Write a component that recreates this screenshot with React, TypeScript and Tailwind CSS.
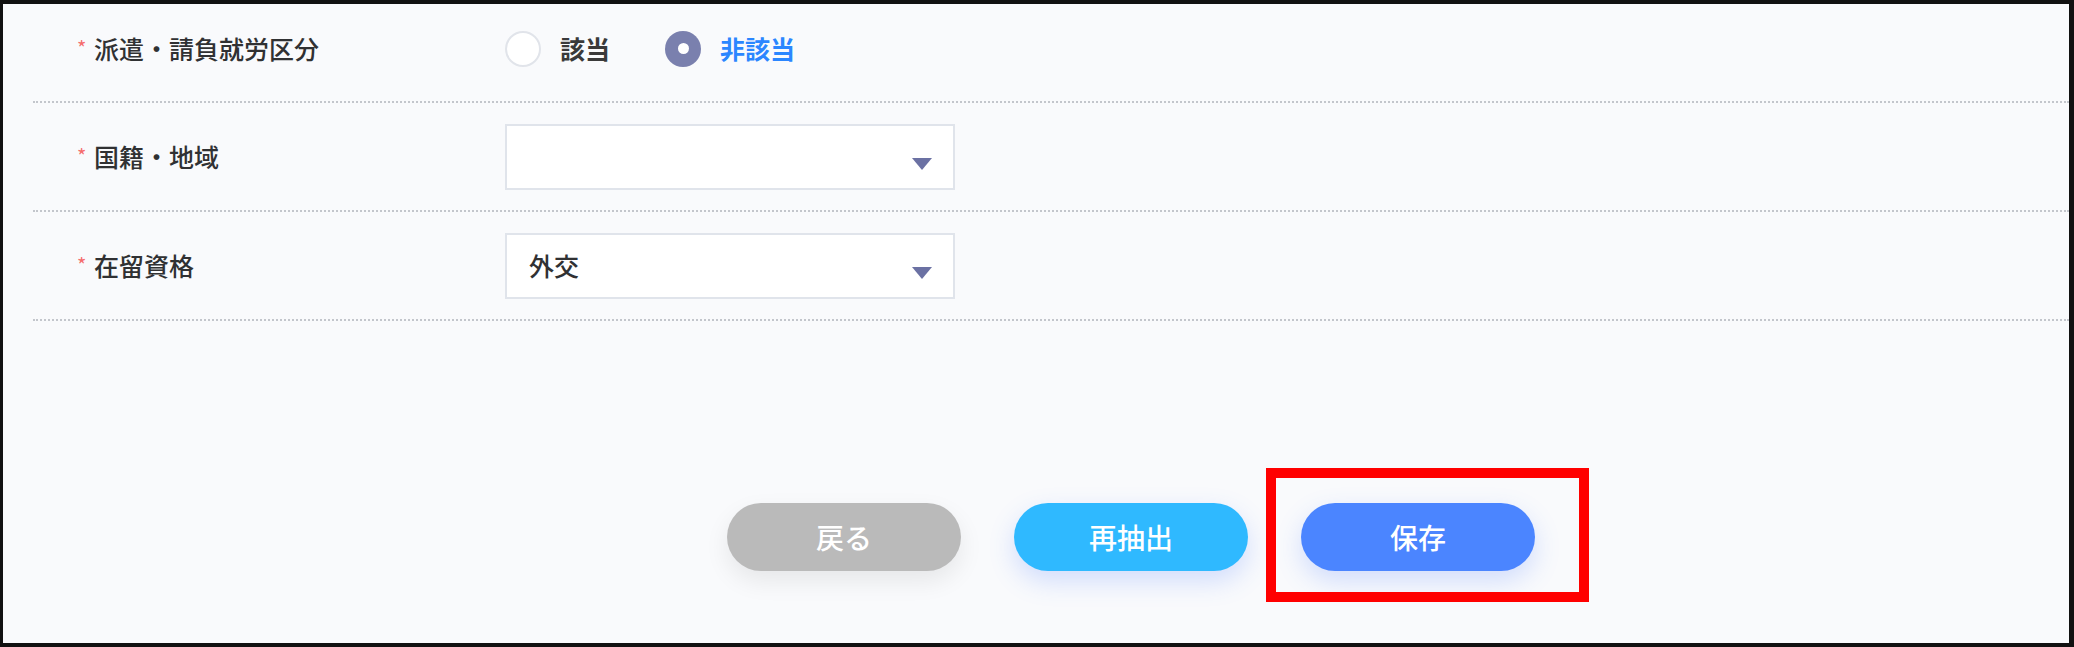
import React from "react";

const rows = [
  { label: "国籍・地域", value: "" },
  { label: "在留資格", value: "外交" },
];

function Label({ text }: { text: string }) {
  return (
    <div className="flex w-[428px] items-center">
      <span className="w-[17px] text-[20px] leading-none text-[#f56c6c] -translate-y-[1px]">*</span>
      <span className="text-[25px] font-medium leading-none text-[#303133]">{text}</span>
    </div>
  );
}

function Radio({ checked, label }: { checked?: boolean; label: string }) {
  return (
    <label className="flex items-center gap-[19px]">
      {checked ? (
        <span className="flex h-[36px] w-[36px] items-center justify-center rounded-full bg-[#7a80ae]">
          <span className="h-[11px] w-[11px] rounded-full bg-white" />
        </span>
      ) : (
        <span className="h-[36px] w-[36px] rounded-full border-2 border-[#e1e4ea] bg-white" />
      )}
      <span
        className={
          checked
            ? "text-[25px] font-bold leading-none text-[#2b86ff]"
            : "text-[25px] font-bold leading-none text-[#3a3a3a]"
        }
      >
        {label}
      </span>
    </label>
  );
}

function Select({ value }: { value: string }) {
  return (
    <div className="flex h-[66px] w-[450px] items-center justify-between border-2 border-[#e0e4eb] bg-white pl-[22px] pr-[21px]">
      <span className="text-[25px] font-medium leading-none text-[#303133]">{value}</span>
      <svg width="20" height="12" viewBox="0 0 20 12" className="mt-[15px]">
        <path d="M0 0h20L10 12z" fill="#6b71a3" />
      </svg>
    </div>
  );
}

export default function App() {
  return (
    <div className="relative h-[647px] w-[2074px] overflow-hidden border-t-4 border-r-[5px] border-b-4 border-l-[3px] border-[#111] bg-[#f9fafc] font-['Noto_Sans_CJK_JP','Noto_Sans',sans-serif]">
      <div className="ml-[30px]">
        <div className="flex h-[99px] items-center border-b-2 border-dotted border-[#c3c6cc] pb-[8px] pl-[44px]">
          <Label text="派遣・請負就労区分" />
          <div className="flex items-center gap-[55px]">
            <Radio label="該当" />
            <Radio checked label="非該当" />
          </div>
        </div>
        {rows.map((r) => (
          <div
            key={r.label}
            className="flex h-[109px] items-center border-b-2 border-dotted border-[#c3c6cc] pl-[44px]"
          >
            <Label text={r.label} />
            <Select value={r.value} />
          </div>
        ))}
      </div>

      <div className="mt-[182px] flex gap-[53px] pl-[724px]">
        <button className="flex h-[68px] w-[234px] items-center justify-center rounded-full bg-[#bababa] text-[28px] font-medium text-white shadow-[0_10px_24px_rgba(0,0,0,0.08)]">
          戻る
        </button>
        <button className="flex h-[68px] w-[234px] items-center justify-center rounded-full bg-[#2fb9ff] text-[28px] font-medium text-white shadow-[0_10px_26px_rgba(70,120,255,0.22)]">
          再抽出
        </button>
        <button className="flex h-[68px] w-[234px] items-center justify-center rounded-full bg-[#4b85ff] text-[28px] font-medium text-white shadow-[0_10px_26px_rgba(70,120,255,0.22)]">
          保存
        </button>
      </div>

      <div className="pointer-events-none absolute left-[1263px] top-[464px] h-[134px] w-[323px] border-[10px] border-[#ff0000]" />
    </div>
  );
}
